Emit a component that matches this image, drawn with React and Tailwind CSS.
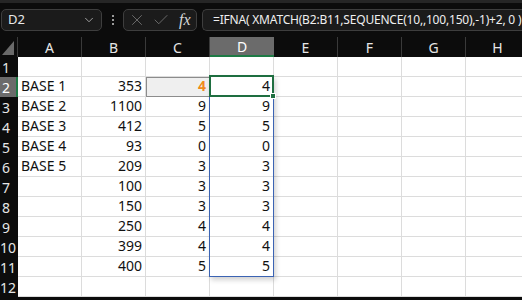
import { ChevronDown, X, Check } from "lucide-react";

const cols = ["A", "B", "C", "D", "E", "F", "G", "H"];
const data = [
  [],
  ["BASE 1", 353, 4, 4],
  ["BASE 2", 1100, 9, 9],
  ["BASE 3", 412, 5, 5],
  ["BASE 4", 93, 0, 0],
  ["BASE 5", 209, 3, 3],
  ["", 100, 3, 3],
  ["", 150, 3, 3],
  ["", 250, 4, 4],
  ["", 399, 4, 4],
  ["", 400, 5, 5],
  [],
];

const cellFont = { fontFamily: '"Noto Sans", "Open Sans", sans-serif' };

export default function App() {
  return (
    <div className="w-[522px] h-[300px] overflow-hidden bg-[#0c0c0c] relative" style={{ fontFamily: '"Noto Sans", "Open Sans", sans-serif' }}>
      {/* formula bar */}
      <div className="h-[3px] bg-[#262626]" />
      <div className="h-[34px] flex items-start pt-[6px] pl-[1px]">
        <div className="w-[101px] h-[22px] rounded-[5px] border border-[#3e3e3e] bg-[#1b1b1b] flex items-center justify-between pl-[6px] pr-[5px]">
          <span className="text-[13px] text-[#e8e8e8]">D2</span>
          <ChevronDown size={14} strokeWidth={1.5} className="text-[#b0b0b0]" />
        </div>
        <div className="w-[21px] h-[22px] flex flex-col items-center justify-center gap-[2px]">
          <span className="w-[2px] h-[2px] bg-[#9a9a9a]" />
          <span className="w-[2px] h-[2px] bg-[#9a9a9a]" />
          <span className="w-[2px] h-[2px] bg-[#9a9a9a]" />
        </div>
        <div className="w-[74px] h-[22px] rounded-[5px] border border-[#3e3e3e] bg-[#1b1b1b] flex items-center pl-[4px]">
          <X size={18} strokeWidth={1.1} className="text-[#7a7a7a]" />
          <Check size={18} strokeWidth={1.1} className="text-[#7a7a7a] ml-[6px]" />
          <span className="ml-[9px] text-[16px] italic text-[#d6d6d6] leading-none" style={{ fontFamily: '"Liberation Serif", "DejaVu Serif", serif' }}>fx</span>
        </div>
        <div className="ml-[5px] flex-1 h-[22px] rounded-l-[5px] border border-r-0 border-[#3e3e3e] bg-[#1b1b1b] flex items-center pl-[10px]">
          <span className="text-[12px] tracking-[-0.2px] text-[#efefef] whitespace-nowrap">=IFNA( XMATCH(B2:B11,SEQUENCE(10,,100,150),-1)+2, 0 )</span>
        </div>
      </div>

      {/* grid */}
      <div className="grid grid-cols-[18px_repeat(8,64px)] auto-rows-[20px]">
        <div className="relative bg-[#0c0c0c] border-r border-[#3a3a3a]">
          <div className="absolute right-[3px] bottom-[2px] w-0 h-0 border-l-[12px] border-l-transparent border-b-[14px] border-b-[#6a6a6a]" />
        </div>
        {cols.map((c) => (
          <div
            key={c}
            className={
              c === "D"
                ? "bg-[#6b6b6b] border-b-2 border-[#1e7a45] flex items-center justify-center text-[14px] text-white"
                : "bg-[#0c0c0c] border-r border-[#3a3a3a] flex items-center justify-center text-[14px] text-[#e6e6e6]"
            }
          >
            {c}
          </div>
        ))}
        {data.map((row, i) => (
          <Row key={i} n={i + 1} row={row} />
        ))}
      </div>

      {/* spill range D2:D11 */}
      <div className="absolute left-[209px] top-[76px] w-[65px] h-[201px] border border-[#3b63b3] shadow-[2px_3px_5px_rgba(0,0,0,0.18)]" />
      {/* active cell D2 */}
      <div className="absolute left-[209px] top-[75px] w-[65px] h-[22px] border-2 border-[#1e6e40]" />
      <div className="absolute left-[270px] top-[93px] w-[6px] h-[6px] bg-[#1e6e40] border border-white" />
    </div>
  );
}

function Row({ n, row }) {
  const sel = n === 2;
  return (
    <>
      <div
        className={
          sel
            ? "bg-[#6b6b6b] border-r-2 border-[#1e7a45] text-white text-[14px] pl-[2px] flex items-center"
            : "bg-[#0c0c0c] text-[#e6e6e6] text-[14px] flex items-center " + (n > 9 ? "pl-0" : "pl-[2px]")
        }
      >
        {n}
      </div>
      {cols.map((c, j) => {
        const v = row[j];
        const isC2 = sel && c === "C";
        return (
          <div
            key={c}
            className={
              (isC2
                ? "bg-[#efefef] border border-[#8c8c8c] "
                : "bg-white border-r border-b border-[#dcdcdc] ") +
              "flex items-end pb-[1px] px-[3px] text-[14px] leading-[18px] text-[#111] " +
              (j === 0 ? "justify-start" : "justify-end")
            }
            style={cellFont}
          >
            {v !== undefined && v !== "" ? (
              isC2 ? (
                <span className="font-bold text-[#f08a1c]">{v}</span>
              ) : (
                v
              )
            ) : null}
          </div>
        );
      })}
    </>
  );
}
